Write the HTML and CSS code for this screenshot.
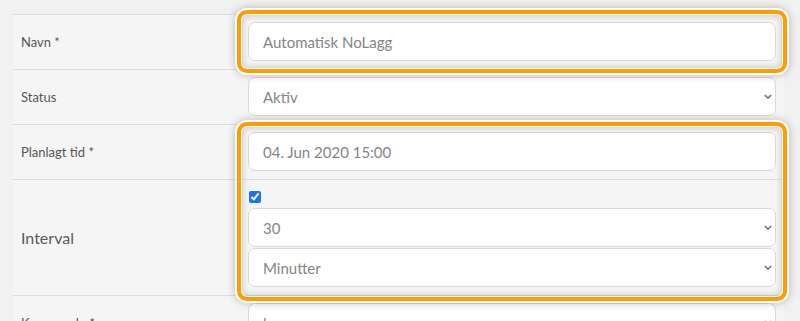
FILE: index.html
```html
<!DOCTYPE html>
<html lang="no">
<head>
    <meta charset="UTF-8">
    <meta name="viewport" content="width=device-width, initial-scale=1.0">
    <title>Planlagt oppgave</title>
    <link rel="stylesheet" href="styles.css">
</head>
<body>

    <div class="form-table">
        <!-- Navn -->
        <div class="row">
            <label class="label" for="navn">Navn *</label>
            <div class="field">
                <input type="text" id="navn" class="control" value="Automatisk NoLagg">
            </div>
        </div>

        <!-- Status -->
        <div class="row">
            <label class="label" for="status">Status</label>
            <div class="field">
                <div class="select-wrap">
                    <select id="status" class="control">
                        <option>Aktiv</option>
                        <option>Inaktiv</option>
                    </select>
                    <svg class="chevron" viewBox="0 0 10 6"><path d="M1 1l4 4 4-4"/></svg>
                </div>
            </div>
        </div>

        <!-- Planlagt tid -->
        <div class="row">
            <label class="label" for="tid">Planlagt tid *</label>
            <div class="field">
                <input type="text" id="tid" class="control" value="04. Jun 2020 15:00">
            </div>
        </div>

        <!-- Interval -->
        <div class="row">
            <label class="label big" for="interval">Interval</label>
            <div class="field">
                <input type="checkbox" class="check" checked>
                <div class="select-wrap">
                    <select id="interval" class="control">
                        <option>30</option>
                    </select>
                    <svg class="chevron" viewBox="0 0 10 6"><path d="M1 1l4 4 4-4"/></svg>
                </div>
                <div class="select-wrap">
                    <select class="control">
                        <option>Minutter</option>
                        <option>Timer</option>
                    </select>
                    <svg class="chevron" viewBox="0 0 10 6"><path d="M1 1l4 4 4-4"/></svg>
                </div>
            </div>
        </div>

        <!-- Kommando -->
        <div class="row">
            <label class="label" for="kommando">Kommando *</label>
            <div class="field">
                <div class="select-wrap">
                    <select id="kommando" class="control">
                        <option>lagg</option>
                    </select>
                    <svg class="chevron" viewBox="0 0 10 6"><path d="M1 1l4 4 4-4"/></svg>
                </div>
            </div>
        </div>

        <!-- Markeringer -->
        <div class="highlight hl-navn"></div>
        <div class="highlight hl-tid"></div>
    </div>

</body>
</html>
```

FILE: styles.css
```css
body {
    font-family: Lato, "Open Sans", Arial, sans-serif;
    background-color: #f1f1f1;
    margin: 0;
    padding: 14px 0 0 13px;
    overflow: hidden;
}
.form-table {
    position: relative;
    width: 771px;
}
.row {
    display: grid;
    grid-template-columns: 227px 1fr;
    align-items: center;
    border-top: 1px solid #dedede;
    background-color: #f5f5f5;
}
.label {
    padding-left: 8px;
    font-size: 13px;
    color: #555;
}
.label.big {
    font-size: 16px;
    color: #5a5a5a;
}
.field {
    display: flex;
    flex-direction: column;
    align-items: flex-start;
    padding: 7px 8px 8px 8px;
}
.control {
    box-sizing: border-box;
    width: 528px;
    height: 39px;
    padding: 0 14px;
    font-family: inherit;
    font-size: 15px;
    color: #858585;
    background-color: #fff;
    border: 1px solid #d9d9d9;
    border-radius: 7px;
    appearance: none;
    outline: none;
}
.select-wrap {
    position: relative;
}
.select-wrap + .select-wrap {
    margin-top: 1px;
}
.chevron {
    position: absolute;
    right: 4px;
    top: 17px;
    width: 8px;
    height: 5px;
    fill: none;
    stroke: #707070;
    stroke-width: 1.8;
}
.check {
    width: 12px;
    height: 12px;
    margin: 4px 0 5px 1px;
    accent-color: #1a73e8;
}
.highlight {
    position: absolute;
    left: 224px;
    width: 550px;
    box-sizing: border-box;
    border: 4px solid #ff9c00;
    border-radius: 10px;
    box-shadow: 0 0 0 2px #fff, 0 0 8px 2px rgba(0, 0, 0, 0.25),
        inset 0 0 0 1px #fff, inset 0 0 6px 2px rgba(0, 0, 0, 0.18);
    pointer-events: none;
}
.hl-navn {
    top: -4px;
    height: 63px;
}
.hl-tid {
    top: 108px;
    height: 179px;
}
```
